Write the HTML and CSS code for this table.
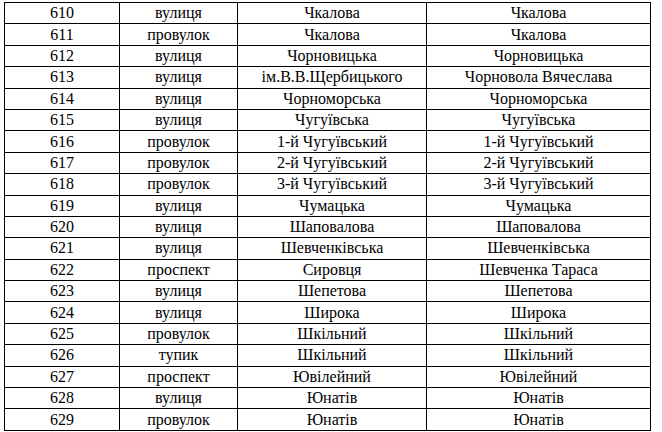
FILE: index.html
```html
<!DOCTYPE html>
<html lang="uk">
<head>
<meta charset="utf-8">
<link rel="stylesheet" href="styles.css">
</head>
<body>
<div class="sheet">
  <div class="cell">610</div><div class="cell">вулиця</div><div class="cell">Чкалова</div><div class="cell">Чкалова</div>
  <div class="cell">611</div><div class="cell">провулок</div><div class="cell">Чкалова</div><div class="cell">Чкалова</div>
  <div class="cell">612</div><div class="cell">вулиця</div><div class="cell">Чорновицька</div><div class="cell">Чорновицька</div>
  <div class="cell">613</div><div class="cell">вулиця</div><div class="cell">ім.В.В.Щербицького</div><div class="cell">Чорновола Вячеслава</div>
  <div class="cell">614</div><div class="cell">вулиця</div><div class="cell">Чорноморська</div><div class="cell">Чорноморська</div>
  <div class="cell">615</div><div class="cell">вулиця</div><div class="cell">Чугуївська</div><div class="cell">Чугуївська</div>
  <div class="cell">616</div><div class="cell">провулок</div><div class="cell">1-й Чугуївський</div><div class="cell">1-й Чугуївський</div>
  <div class="cell">617</div><div class="cell">провулок</div><div class="cell">2-й Чугуївський</div><div class="cell">2-й Чугуївський</div>
  <div class="cell">618</div><div class="cell">провулок</div><div class="cell">3-й Чугуївський</div><div class="cell">3-й Чугуївський</div>
  <div class="cell">619</div><div class="cell">вулиця</div><div class="cell">Чумацька</div><div class="cell">Чумацька</div>
  <div class="cell">620</div><div class="cell">вулиця</div><div class="cell">Шаповалова</div><div class="cell">Шаповалова</div>
  <div class="cell">621</div><div class="cell">вулиця</div><div class="cell">Шевченківська</div><div class="cell">Шевченківська</div>
  <div class="cell">622</div><div class="cell">проспект</div><div class="cell">Сировця</div><div class="cell">Шевченка Тараса</div>
  <div class="cell">623</div><div class="cell">вулиця</div><div class="cell">Шепетова</div><div class="cell">Шепетова</div>
  <div class="cell">624</div><div class="cell">вулиця</div><div class="cell">Широка</div><div class="cell">Широка</div>
  <div class="cell">625</div><div class="cell">провулок</div><div class="cell">Шкільний</div><div class="cell">Шкільний</div>
  <div class="cell">626</div><div class="cell">тупик</div><div class="cell">Шкільний</div><div class="cell">Шкільний</div>
  <div class="cell">627</div><div class="cell">проспект</div><div class="cell">Ювілейний</div><div class="cell">Ювілейний</div>
  <div class="cell">628</div><div class="cell">вулиця</div><div class="cell">Юнатів</div><div class="cell">Юнатів</div>
  <div class="cell">629</div><div class="cell">провулок</div><div class="cell">Юнатів</div><div class="cell">Юнатів</div>
</div>
</body>
</html>
```
FILE: styles.css
```css
html, body {
  margin: 0;
  padding: 0;
  background: #ffffff;
}
body {
  padding: 2px 0 0 4px;
  font-family: "Liberation Serif", "Times New Roman", serif;
  font-size: 16px;
  color: #000000;
}
.sheet {
  display: grid;
  grid-template-columns: 114px 117px 188px 223px;
  grid-auto-rows: 20.4px;
  gap: 1px;
  padding: 1px;
  background: #000000;
  width: max-content;
}
.cell {
  background: #ffffff;
  display: flex;
  align-items: center;
  justify-content: center;
  white-space: nowrap;
  line-height: 1;
}
```
